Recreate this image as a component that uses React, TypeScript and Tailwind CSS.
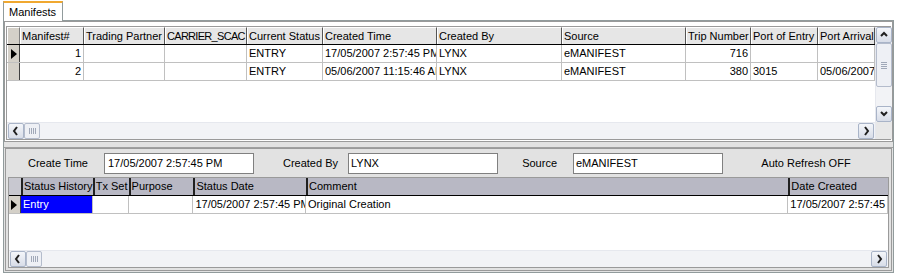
import React from "react";

type Col = { label: string; w: number; right?: boolean; tight?: boolean };

const topCols: Col[] = [
  { label: "Manifest#", w: 64, right: true },
  { label: "Trading Partner", w: 81 },
  { label: "CARRIER_SCAC", w: 82, tight: true },
  { label: "Current Status", w: 76 },
  { label: "Created Time", w: 114 },
  { label: "Created By", w: 125 },
  { label: "Source", w: 124 },
  { label: "Trip Number", w: 65, right: true },
  { label: "Port of Entry", w: 67 },
  { label: "Port Arrival", w: 57 },
];

const topRows = [
  ["1", "", "", "ENTRY", "17/05/2007 2:57:45 PM", "LYNX", "eMANIFEST", "716", "", ""],
  ["2", "", "", "ENTRY", "05/06/2007 11:15:46 AM", "LYNX", "eMANIFEST", "380", "3015", "05/06/2007"],
];

const bottomCols: Col[] = [
  { label: "Status History", w: 72 },
  { label: "Tx Set", w: 36 },
  { label: "Purpose", w: 65 },
  { label: "Status Date", w: 113 },
  { label: "Comment", w: 484 },
  { label: "Date Created", w: 100 },
];

const bottomRow = ["Entry", "", "", "17/05/2007 2:57:45 PM", "Original Creation", "17/05/2007 2:57:45 PM"];

const Chevron = ({ dir }: { dir: "up" | "down" | "left" | "right" }) => {
  const d = {
    up: "M2 6 L5 3 L8 6",
    down: "M2 3 L5 6 L8 3",
    left: "M6 1 L3 5 L6 9",
    right: "M4 1 L7 5 L4 9",
  }[dir];
  return (
    <svg width="10" height="10" viewBox="0 0 10 10">
      <path d={d} fill="none" stroke="#202020" strokeWidth="2" />
    </svg>
  );
};

const ScrollBtn = ({ dir }: { dir: "up" | "down" | "left" | "right" }) => (
  <div className="w-[16px] h-[16px] shrink-0 flex items-center justify-center rounded-[2px] border border-[#a9b4c8] bg-gradient-to-b from-[#f4f6fa] to-[#d8dde8]">
    <Chevron dir={dir} />
  </div>
);

const Grip = ({ vertical }: { vertical?: boolean }) => (
  <div className={"flex gap-[1px] " + (vertical ? "flex-col" : "")}>
    {[0, 1, 2, 3].map((i) =>
      vertical ? (
        <div key={i} className="w-[6px] h-[1px] bg-[#a0a8b8]" />
      ) : (
        <div key={i} className="w-[1px] h-[6px] bg-[#a0a8b8]" />
      )
    )}
  </div>
);

const Arrow = () => (
  <svg width="8" height="12" viewBox="0 0 8 12">
    <path d="M1 1 L7 6 L1 11 Z" fill="#000" />
  </svg>
);

const HScroll = () => (
  <div className="h-[17px] bg-[#f2f3f6] flex items-center px-[1px] border-t border-[#e6e8ee]">
    <ScrollBtn dir="left" />
    <div className="w-[16px] h-[16px] flex items-center justify-center rounded-[2px] border border-[#b4bccc] bg-[#eef0f5]">
      <Grip />
    </div>
    <div className="flex-1" />
    <ScrollBtn dir="right" />
  </div>
);

export default function App() {
  return (
    <div className="w-[897px] h-[274px] bg-white text-[11px] leading-none text-black font-['Liberation_Sans',Tahoma,sans-serif] overflow-hidden">
      {/* tab strip */}
      <div className="h-[20px] pl-[3px] pt-[1px] flex">
        <div className="w-[60px] h-[20px] border border-b-0 border-[#919b9c] border-t-[2px] border-t-[#f0a830] bg-white flex items-center pl-[5px] relative z-10">
          Manifests
        </div>
      </div>

      {/* tab page */}
      <div className="mx-[3px] h-[253px] border border-[#919b9c] bg-[#e2e2e2] flex flex-col">
        {/* top grid frame */}
        <div className="h-[121px] border border-[#9a9a9a] bg-white pt-[4px] px-[1px] pb-[1px]">
          <div className="h-full border border-[#9a9a9a] flex">
            <div className="flex-1 flex flex-col">
              <div className="flex-1 bg-white">
                <div className="flex h-[18px] border-b border-black">
                  <div className="w-[13px] bg-[#d4d0c8] border-r border-[#808080] border-l border-t border-l-white border-t-white" />
                  {topCols.map((c) => (
                    <div
                      key={c.label}
                      style={{ width: c.w }}
                      className={
                        "bg-[#e6e6e6] border-r border-[#555] border-l border-l-white border-t border-t-white flex items-center pl-[1px] whitespace-nowrap overflow-hidden " +
                        (c.tight ? "tracking-[-0.7px]" : "")
                      }
                    >
                      {c.label}
                    </div>
                  ))}
                </div>
                {topRows.map((r, ri) => (
                  <div key={ri} className="flex h-[18px] border-b border-[#c0c0c0]">
                    <div className="w-[13px] bg-[#d4d0c8] border-r border-[#404040] border-l border-l-white flex items-center justify-center">
                      {ri === 0 && <Arrow />}
                    </div>
                    {topCols.map((c, ci) => (
                      <div
                        key={ci}
                        style={{ width: c.w }}
                        className={
                          "border-r border-[#c0c0c0] flex items-center px-[2px] whitespace-nowrap overflow-hidden " +
                          (c.right ? "justify-end" : "")
                        }
                      >
                        {r[ci]}
                      </div>
                    ))}
                  </div>
                ))}
              </div>
              <HScroll />
            </div>
            {/* vertical scrollbar */}
            <div className="w-[17px] bg-[#f2f3f6] flex flex-col items-center border-l border-[#e6e8ee]">
              <ScrollBtn dir="up" />
              <div className="w-[16px] h-[44px] flex items-center justify-center rounded-[2px] border border-[#b4bccc] bg-[#eef0f5]">
                <Grip vertical />
              </div>
              <div className="flex-1" />
              <ScrollBtn dir="down" />
              <div className="h-[17px] w-full bg-[#e8e8e8]" />
            </div>
          </div>
        </div>

        {/* splitter */}
        <div className="h-[6px] border-b border-[#a0a0a0]" />

        {/* bottom section */}
        <div className="flex-1 mx-[1px] mb-[1px] border border-[#9a9a9a] flex flex-col">
          <div className="h-[28px] flex items-center">
            <div className="w-[98px] pl-[22px]">Create Time</div>
            <div className="w-[150px] h-[21px] border border-[#808080] bg-white flex items-center pl-[3px]">
              17/05/2007 2:57:45 PM
            </div>
            <div className="w-[94px] text-right pr-[10px]">Created By</div>
            <div className="w-[150px] h-[21px] border border-[#808080] bg-white flex items-center pl-[2px]">
              LYNX
            </div>
            <div className="w-[75px] text-right pr-[16px]">Source</div>
            <div className="w-[150px] h-[21px] border border-[#808080] bg-white flex items-center pl-[2px]">
              eMANIFEST
            </div>
            <div className="flex-1 text-center pr-[2px]">Auto Refresh OFF</div>
          </div>

          <div className="flex-1 mx-[2px] mb-[2px] border border-[#9a9a9a] bg-white flex flex-col">
            <div className="flex-1">
              <div className="flex h-[18px] border-b border-black bg-[#b8b8c4]">
                <div className="w-[12px] bg-[#c8c8d0]" />
                {bottomCols.map((c) => (
                  <div
                    key={c.label}
                    style={{ width: c.w }}
                    className="border-l-2 border-[#202020] flex items-center pl-[1px] whitespace-nowrap overflow-hidden"
                  >
                    {c.label}
                  </div>
                ))}
              </div>
              <div className="flex h-[18px] border-b border-[#c0c0c0]">
                <div className="w-[12px] bg-[#d4d0c8] border-r border-[#404040] flex items-center justify-center">
                  <Arrow />
                </div>
                {bottomCols.map((c, ci) => (
                  <div
                    key={ci}
                    style={{ width: c.w }}
                    className={
                      "border-r border-[#c0c0c0] flex items-center px-[2px] whitespace-nowrap overflow-hidden " +
                      (ci === 0 ? "bg-[#0000ff] text-white" : "")
                    }
                  >
                    {bottomRow[ci]}
                  </div>
                ))}
              </div>
            </div>
            <HScroll />
          </div>
        </div>
      </div>
    </div>
  );
}
